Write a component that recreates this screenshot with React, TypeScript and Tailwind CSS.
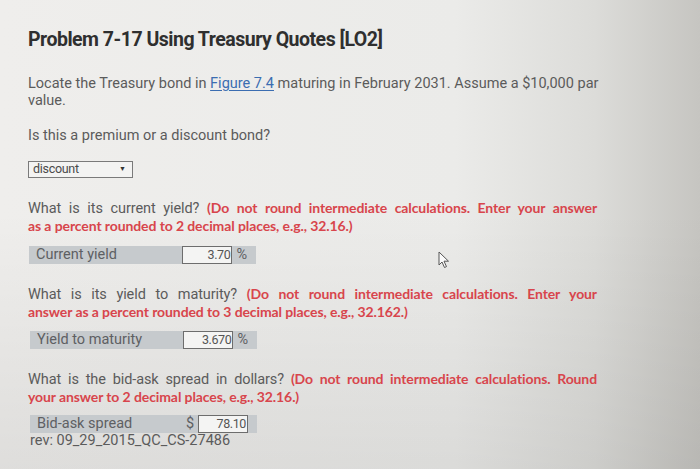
import React from 'react';

const body = "font-['Roboto',_'Liberation_Sans',_sans-serif]";
const red = "font-['Lato',_'Open_Sans',_sans-serif] font-bold text-[14px] text-[#d8454c]";

function Question({ ask, first, second }: { ask: string; first: string; second: string }) {
  return (
    <div className="w-[569px] text-[14.5px] leading-[17px] text-[#5b5b5b] tracking-[-0.1px]">
      <div className="text-justify [text-align-last:justify]">
        {ask} <span className={red}>{first}</span>
      </div>
      <div className={red}>{second}</div>
    </div>
  );
}

function AnswerRow({
  label,
  value,
  prefix,
  suffix,
}: {
  label: string;
  value: string;
  prefix?: string;
  suffix?: string;
}) {
  return (
    <div className="flex h-[18px] w-[227px] items-center bg-[#c6cacd] text-[14.5px] text-[#5e6063]">
      <span className="pl-[7px]">{label}</span>
      <div className="ml-auto mr-[9px] flex items-center">
        {prefix && <span className="mr-[3px] w-[10px] text-center">{prefix}</span>}
        <div className="flex h-[18px] w-[50px] items-center justify-end border border-[#6d6d6d] bg-[#f4f4f3] pr-[1px] text-[12.5px] tracking-[-0.4px] text-[#555]">
          {value}
        </div>
        {suffix && <span className="ml-[4px]">{suffix}</span>}
      </div>
    </div>
  );
}

export default function App() {
  return (
    <div
      className={`relative h-[469px] w-[700px] overflow-hidden bg-[linear-gradient(180deg,rgba(0,0,0,0)_45%,rgba(0,0,0,0.07)_100%),linear-gradient(90deg,#efeeec_0%,#ebebe9_65%,#dcdcd9_85%,#c6c5c1_100%)] ${body}`}
    >
      <div className="pl-[28px] pt-[28px]">
        <h1 className="text-[19.5px] font-bold leading-[24px] tracking-[-0.5px] text-[#2f2f2f]">
          Problem 7-17 Using Treasury Quotes [LO2]
        </h1>

        <p className="mt-[23px] w-[575px] text-[14.5px] leading-[17px] text-[#5b5b5b]">
          Locate the Treasury bond in{' '}
          <span className="text-[#3b6db1] underline underline-offset-2">Figure 7.4</span> maturing in
          February 2031. Assume a $10,000 par value.
        </p>

        <p className="mt-[18px] text-[14.5px] leading-[17px] text-[#5b5b5b]">
          Is this a premium or a discount bond?
        </p>

        <div className="mt-[17px] flex h-[17px] w-[105px] items-center justify-between border border-[#7a7a7a] bg-[#f3f3f2] pl-[4px] pr-[6px] text-[12.5px] text-[#4a4a4a]">
          <span className="tracking-[-0.3px]">discount</span>
          <span className="text-[7px] text-[#333]">▼</span>
        </div>

        <div className="mt-[21px]">
          <Question
            ask="What is its current yield?"
            first="(Do not round intermediate calculations. Enter your answer"
            second="as a percent rounded to 2 decimal places, e.g., 32.16.)"
          />
        </div>

        <div className="mt-[12px] pl-[1px]">
          <AnswerRow label="Current yield" value="3.70" suffix="%" />
        </div>

        <div className="mt-[21px]">
          <Question
            ask="What is its yield to maturity?"
            first="(Do not round intermediate calculations. Enter your"
            second="answer as a percent rounded to 3 decimal places, e.g., 32.162.)"
          />
        </div>

        <div className="mt-[11px] pl-[2px]">
          <AnswerRow label="Yield to maturity" value="3.670" suffix="%" />
        </div>

        <div className="mt-[21px]">
          <Question
            ask="What is the bid-ask spread in dollars?"
            first="(Do not round intermediate calculations. Round"
            second="your answer to 2 decimal places, e.g., 32.16.)"
          />
        </div>

        <div className="mt-[10px] pl-[2px]">
          <AnswerRow label="Bid-ask spread" value="78.10" prefix="$" />
        </div>

        <p className="pl-[2px] text-[14.5px] leading-[16px] text-[#5b5b5b]">
          rev: 09_29_2015_QC_CS-27486
        </p>
      </div>

      {/* mouse pointer over the page */}
      <svg className="absolute left-[438px] top-[251px]" width="12" height="18" viewBox="0 0 12 18">
        <path
          d="M1 1 L1 14 L4 11 L6.5 16.5 L8.5 15.6 L6 10.2 L10.5 10.2 Z"
          fill="#fafafa"
          stroke="#555"
          strokeWidth="1"
          strokeLinejoin="round"
        />
      </svg>
    </div>
  );
}
